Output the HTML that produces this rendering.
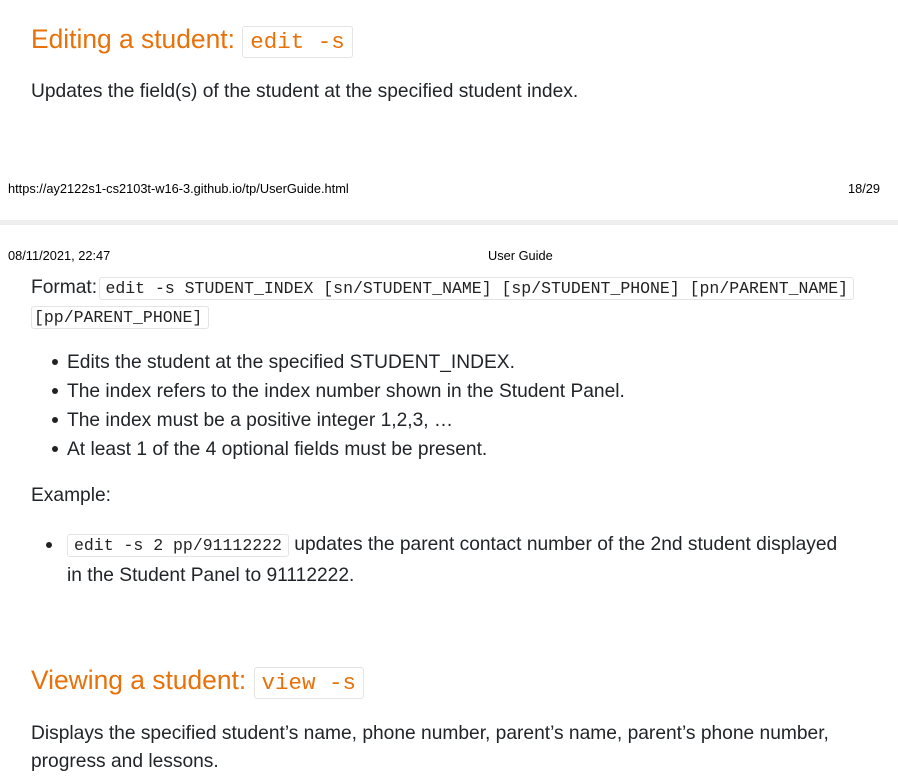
<!DOCTYPE html>
<html><head><meta charset="utf-8"><style>
body{margin:0;width:898px;height:783px;background:#fff;position:relative;overflow:hidden;font-family:"Liberation Sans",sans-serif;color:#212529}
.a{position:absolute;white-space:nowrap}
.t{font-size:19.2px;line-height:29px}
.h{font-size:26.4px;color:#e8710a;line-height:34px}
code{font-family:"Liberation Mono",monospace;border:1px solid #e4e4e4;border-radius:3px;background:#fff;padding:2px 6px}
.h code{font-size:22.5px;padding:2px 7px;color:#e8710a}
.t code{font-size:16.5px;padding:1px 6px;color:#222}
.s{font-size:12.8px;color:#000;font-family:"Liberation Sans",sans-serif}
.b{position:absolute;width:6px;height:6px;border-radius:50%;background:#222}
</style></head><body>
<div class="a h" style="left:31px;top:22px">Editing a student: <code>edit -s</code></div>
<div class="a t" style="left:31px;top:77px">Updates the field(s) of the student at the specified student index.</div>
<div class="a s" style="left:8px;top:181px">https://ay2122s1-cs2103t-w16-3.github.io/tp/UserGuide.html</div>
<div class="a s" style="right:18px;top:181px">18/29</div>
<div class="a" style="left:0;top:220px;width:898px;height:5px;background:#eee"></div>
<div class="a s" style="left:8px;top:248px">08/11/2021, 22:47</div>
<div class="a s" style="left:488px;top:248px">User Guide</div>
<div class="a t" style="left:31px;top:273px">Format: <code style="margin-left:-3px;padding:1px 5px">edit -s STUDENT_INDEX [sn/STUDENT_NAME] [sp/STUDENT_PHONE] [pn/PARENT_NAME]</code></div>
<div class="a t" style="left:31px;top:302px"><code style="padding-left:2px">[pp/PARENT_PHONE]</code></div>
<div class="b" style="left:52px;top:359px"></div><div class="a t" style="left:67px;top:348px">Edits the student at the specified STUDENT_INDEX.</div>
<div class="b" style="left:52px;top:388px"></div><div class="a t" style="left:67px;top:377px">The index refers to the index number shown in the Student Panel.</div>
<div class="b" style="left:52px;top:417px"></div><div class="a t" style="left:67px;top:406px">The index must be a positive integer 1,2,3, …</div>
<div class="b" style="left:52px;top:446px"></div><div class="a t" style="left:67px;top:435px">At least 1 of the 4 optional fields must be present.</div>
<div class="a t" style="left:31px;top:481px">Example:</div>
<div class="b" style="left:46px;top:542px"></div><div class="a t" style="left:67px;top:530px"><code>edit -s 2 pp/91112222</code> updates the parent contact number of the 2nd student displayed</div>
<div class="a t" style="left:67px;top:561px">in the Student Panel to 91112222.</div>
<div class="a h" style="left:31px;top:663px">Viewing a student: <code>view -s</code></div>
<div class="a t" style="left:31px;top:719px">Displays the specified student’s name, phone number, parent’s name, parent’s phone number,</div>
<div class="a t" style="left:31px;top:747px">progress and lessons.</div>
</body></html>
